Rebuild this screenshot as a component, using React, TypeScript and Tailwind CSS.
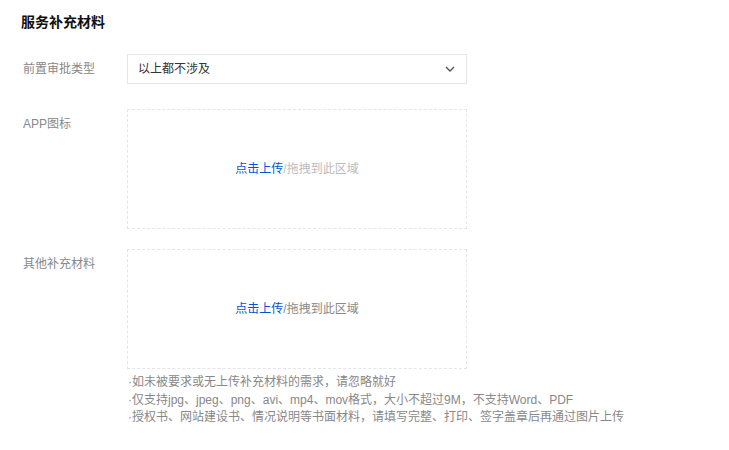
import React from 'react';

const font = 'font-["Liberation_Sans","Noto_Sans_CJK_SC",sans-serif]';

const Upload: React.FC<{ hintClass: string }> = ({ hintClass }) => (
  <div className="w-[340px] h-[120px] border border-dashed border-[#e3e5ea] flex items-center justify-center text-[12px]">
    <span className="text-[#0052d9]">点击上传</span>
    <span className={hintClass}>/拖拽到此区域</span>
  </div>
);

export default function App() {
  return (
    <div className={`${font} bg-white w-[729px] h-[450px] text-[12px]`}>
      <div className="pt-[13px] pl-[21px]">
        <h2 className="text-[14px] font-bold text-[#111] leading-[18px]">服务补充材料</h2>
      </div>

      <div className="flex pl-[23px] mt-[23px]">
        <div className="w-[104px] text-[#888] leading-[30px]">前置审批类型</div>
        <div className="w-[340px] h-[30px] border border-[#e3e6eb] flex items-center justify-between pl-[10px] pr-[11px] text-[#333]">
          <span>以上都不涉及</span>
          <svg width="10" height="6" viewBox="0 0 10 6" fill="none">
            <path d="M1 1l4 4 4-4" stroke="#555" strokeWidth="1.4" />
          </svg>
        </div>
      </div>

      <div className="flex pl-[23px] mt-[25px]">
        <div className="w-[104px] text-[#888] leading-[18px] pt-[6px]">APP图标</div>
        <Upload hintClass="text-[#bbb]" />
      </div>

      <div className="flex pl-[23px] mt-[20px]">
        <div className="w-[104px] text-[#888] leading-[18px] pt-[6px]">其他补充材料</div>
        <div>
          <Upload hintClass="text-[#888]" />
          <div className="text-[#888] leading-[17.5px] pt-[5px] pl-[1px]">
            <p>·如未被要求或无上传补充材料的需求，请忽略就好</p>
            <p>·仅支持jpg、jpeg、png、avi、mp4、mov格式，大小不超过9M，不支持Word、PDF</p>
            <p>·授权书、网站建设书、情况说明等书面材料，请填写完整、打印、签字盖章后再通过图片上传</p>
          </div>
        </div>
      </div>
    </div>
  );
}
